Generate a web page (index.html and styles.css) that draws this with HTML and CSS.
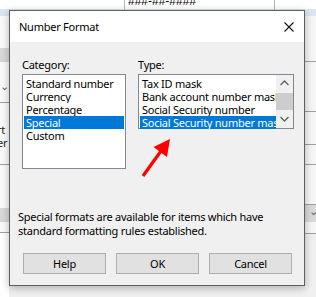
FILE: index.html
```html
<!DOCTYPE html>
<html lang="en">
<head>
  <meta charset="UTF-8" />
  <title>Number Format</title>
  <link rel="stylesheet" href="styles.css">
</head>
<body>

<div class="sheet">
  <div class="row-top"><span class="cell-a"></span><span class="cell-b">###-##-####</span><span class="cell-c"></span></div>
  <div class="row-sel"><span class="cell-a"></span><span class="cell-b">#,###,###.00</span><span class="cell-c"></span></div>
  <div class="panes">
    <div class="pane-left">
      <div class="band" style="height:32px"></div>
      <div class="band dark" style="height:14px"></div>
      <div class="band line" style="height:41px"><span class="chev">&#8964;</span></div>
      <div class="band line" style="height:62px"><span class="txt">rt<br>er</span></div>
      <div class="band" style="height:43px"></div>
      <div class="band dark" style="height:14px"></div>
      <div class="band line" style="height:11px"></div>
    </div>
    <div class="pane-mid"></div>
    <div class="pane-right">
      <div class="band" style="height:32px"></div>
      <div class="band line" style="height:14px"></div>
      <div class="band line" style="height:50px"></div>
      <div class="band line" style="height:33px"></div>
      <div class="band line" style="height:20px"></div>
      <div class="band line" style="height:40px"></div>
      <div class="band dark" style="height:17px"><span class="chev">&#8964;</span></div>
      <div class="band line" style="height:12px"></div>
    </div>
  </div>
</div>

<div class="dialog">
  <div class="titlebar">
    <span class="title">Number Format</span>
    <svg class="close" width="10" height="10" viewBox="0 0 10 10">
      <path d="M0.5 0.5 L9.5 9.5 M9.5 0.5 L0.5 9.5" stroke="#111" stroke-width="1.1" fill="none"/>
    </svg>
  </div>
  <div class="body">
    <div class="lists">
      <div class="group group-cat">
        <div class="label">Category:</div>
        <ul class="listbox catbox">
          <li>Standard number</li>
          <li>Currency</li>
          <li>Percentage</li>
          <li class="selected">Special</li>
          <li>Custom</li>
        </ul>
      </div>
      <div class="group group-type">
        <div class="label">Type:</div>
        <div class="listbox typebox">
          <ul>
            <li>Tax ID mask</li>
            <li>Bank account number mask</li>
            <li>Social Security number</li>
            <li class="selected">Social Security number mask</li>
          </ul>
          <div class="scrollbar">
            <svg class="sb-arrow" width="17" height="17" viewBox="0 0 17 17">
              <path d="M4.5 10 L8.5 6 L12.5 10" stroke="#606060" stroke-width="1.3" fill="none"/>
            </svg>
            <div class="sb-track"><div class="sb-thumb"></div></div>
            <svg class="sb-arrow" width="17" height="17" viewBox="0 0 17 17">
              <path d="M4.5 6 L8.5 10 L12.5 6" stroke="#606060" stroke-width="1.3" fill="none"/>
            </svg>
          </div>
        </div>
      </div>
    </div>
    <p class="desc">Special formats are available for items which have standard formatting rules established.</p>
    <div class="buttons">
      <button>Help</button>
      <button>OK</button>
      <button>Cancel</button>
    </div>
  </div>
</div>

<!-- red annotation arrow -->
<svg class="arrow" width="316" height="297" viewBox="0 0 316 297">
  <line x1="143" y1="176" x2="161" y2="151" stroke="#f00" stroke-width="3.2"/>
  <polygon points="170,139 153.5,147 167,157" fill="#f00"/>
</svg>

</body>
</html>
```

FILE: styles.css
```css
body {
  margin: 0;
  width: 316px;
  height: 297px;
  overflow: hidden;
  font-family: "Noto Sans", "Open Sans", sans-serif;
  font-size: 11px;
  letter-spacing: -0.25px;
  color: #000;
  background: #fff;
}

/* spreadsheet behind the dialog */
.sheet {
  display: flex;
  flex-direction: column;
  height: 297px;
}
.row-top, .row-sel {
  display: flex;
  overflow: hidden;
  font-family: "Liberation Sans", sans-serif;
  font-size: 12px;
  letter-spacing: 0;
}
.row-top {
  height: 9px;
  background: #fff;
  line-height: 9px;
}
.row-top .cell-b {
  margin-top: -3px;
}
.row-sel {
  height: 7px;
  background: #dbe5f3;
  line-height: 16px;
}
.cell-a {
  flex: none;
  width: 124px;
  border-right: 1px solid #b5b5b5;
}
.cell-b {
  flex: none;
  width: 146px;
  padding-left: 3px;
  border-right: 1px solid #b5b5b5;
  white-space: nowrap;
}
.cell-c {
  flex: 1;
}
.panes {
  flex: 1;
  display: flex;
}
.pane-left {
  width: 9px;
  background: #fff;
}
.pane-mid {
  flex: 1;
  background: #f0f0f0;
}
.pane-right {
  width: 11px;
  background: #f0f0f0;
}
.band {
  box-sizing: border-box;
  overflow: hidden;
  background: #f6f6f6;
}
.pane-left .band {
  background: #fafafa;
}
.band.dark, .pane-left .band.dark {
  background: #d9d9d9;
}
.band.line {
  border-bottom: 1px solid #a0a0a0;
}
.chev {
  display: block;
  color: #666;
  font-size: 11px;
  line-height: 12px;
  padding-top: 18px;
}
.pane-right .chev {
  padding-top: 0;
  padding-left: 4px;
}
.txt {
  display: block;
  padding-top: 20px;
  margin-left: -3px;
  line-height: 13px;
  color: #222;
}

/* dialog */
.dialog {
  position: absolute;
  left: 9px;
  top: 10px;
  width: 296px;
  height: 276px;
  box-sizing: border-box;
  border: 1px solid #5f5f5f;
  background: #f0f0f0;
  box-shadow: 0 2px 8px rgba(0,0,0,0.28);
  display: flex;
  flex-direction: column;
}
.titlebar {
  height: 31px;
  background: #fff;
  display: flex;
  align-items: center;
  justify-content: space-between;
  padding: 0 10px 0 9px;
}
.title {
  font-size: 11px;
}
.close {
  display: block;
}
.body {
  flex: 1;
  padding: 16px 10px 0 8px;
}
.lists {
  display: flex;
  gap: 12px;
  padding-left: 4px;
}
.label {
  height: 14px;
  line-height: 14px;
  margin-bottom: 2px;
}
.group-cat {
  width: 104px;
}
.group-type {
  width: 156px;
}
.listbox {
  box-sizing: border-box;
  background: #fff;
  border: 1px solid #828790;
  margin: 0;
  padding: 2px 1px 0 1px;
  list-style: none;
}
.catbox {
  height: 95px;
}
.listbox li, .typebox li {
  height: 13px;
  line-height: 13px;
  padding-left: 2px;
  white-space: nowrap;
  overflow: hidden;
}
.listbox li.selected {
  background: #0078d7;
  color: #fff;
}
.typebox {
  height: 55px;
  display: flex;
  padding: 0;
}
.typebox ul {
  flex: 1;
  min-width: 0;
  margin: 0;
  padding: 2px 0 0 1px;
  list-style: none;
}
.scrollbar {
  width: 17px;
  background: #f0f0f0;
  display: flex;
  flex-direction: column;
}
.sb-arrow {
  display: block;
  flex: none;
}
.sb-track {
  flex: 1;
  padding-top: 1px;
}
.sb-thumb {
  height: 17px;
  background: #cdcdcd;
}
.desc {
  margin: 41px 0 0 0;
  line-height: 14px;
  width: 270px;
}
.buttons {
  display: flex;
  gap: 10px;
  margin-top: 15px;
  padding-left: 5px;
}
button {
  width: 83px;
  height: 21px;
  padding: 0;
  border: 1px solid #adadad;
  background: #e1e1e1;
  font-family: "Noto Sans", "Open Sans", sans-serif;
  font-size: 11px;
  letter-spacing: -0.25px;
  color: #000;
}

.arrow {
  position: absolute;
  left: 0;
  top: 0;
  pointer-events: none;
}
```
